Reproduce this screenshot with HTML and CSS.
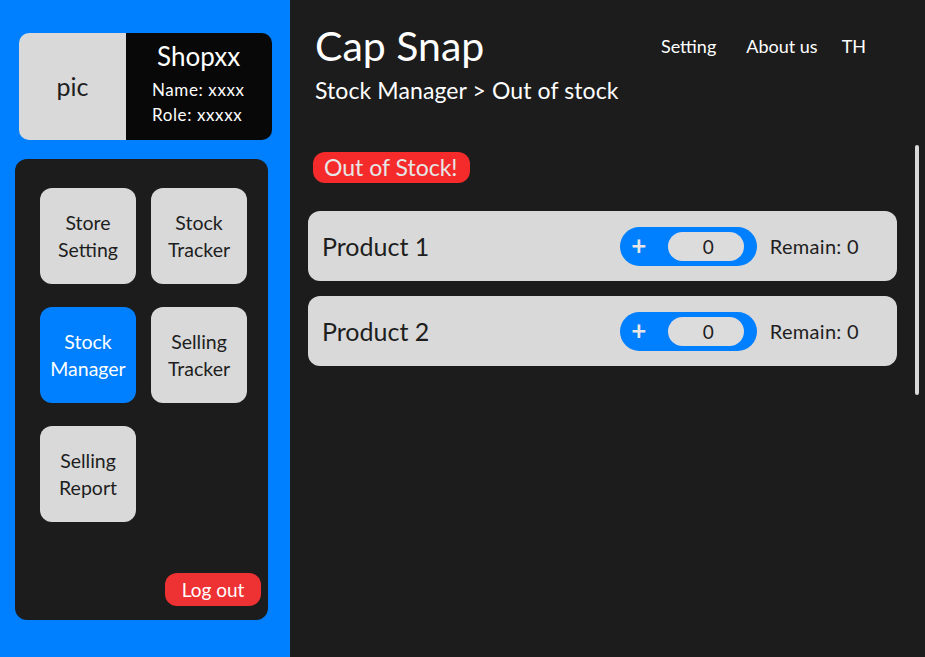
FILE: index.html
```html
<!DOCTYPE html>
<html lang="en">
<head>
<meta charset="utf-8">
<title>Cap Snap - Out of stock</title>
<link rel="stylesheet" href="styles.css">
</head>
<body>
<div class="app">
  <aside class="sidebar">
    <div class="profile">
      <div class="pic">pic</div>
      <div class="info">
        <div class="shop">Shopxx</div>
        <div class="meta">Name: xxxx</div>
        <div class="meta">Role: xxxxx</div>
      </div>
    </div>
    <nav class="panel">
      <div class="tiles">
        <div class="tile">Store<br>Setting</div>
        <div class="tile">Stock<br>Tracker</div>
        <div class="tile active">Stock<br>Manager</div>
        <div class="tile">Selling<br>Tracker</div>
        <div class="tile">Selling<br>Report</div>
      </div>
      <button class="logout">Log out</button>
    </nav>
  </aside>
  <main class="main">
    <header class="header">
      <div class="title">Cap Snap</div>
      <ul class="links">
        <li class="l-setting">Setting</li>
        <li class="l-about">About us</li>
        <li class="l-th">TH</li>
      </ul>
    </header>
    <div class="crumb">Stock Manager &gt; Out of stock</div>
    <section class="content">
      <div class="list">
        <div class="badge">Out of Stock!</div>
        <div class="card">
          <div class="name">Product 1</div>
          <div class="pill"><span class="plus">+</span><span class="field">0</span></div>
          <div class="remain">Remain: 0</div>
        </div>
        <div class="card">
          <div class="name">Product 2</div>
          <div class="pill"><span class="plus">+</span><span class="field">0</span></div>
          <div class="remain">Remain: 0</div>
        </div>
      </div>
      <div class="scrollbar"></div>
    </section>
  </main>
</div>
</body>
</html>
```
FILE: styles.css
```css
* { box-sizing: border-box; }
html, body { margin: 0; padding: 0; }
body {
  width: 925px;
  height: 657px;
  overflow: hidden;
  font-family: "Lato", "Open Sans", sans-serif;
  background: #1c1c1c;
}
.app {
  display: flex;
  width: 925px;
  height: 657px;
}
.sidebar {
  width: 290px;
  flex: none;
  background: #0080ff;
  padding-top: 33px;
  display: flex;
  flex-direction: column;
}
.profile {
  margin-left: 19px;
  width: 253px;
  height: 107px;
  display: flex;
}
.pic {
  width: 107px;
  background: #d9d9d9;
  border-radius: 10px 0 0 10px;
  display: flex;
  align-items: center;
  justify-content: center;
  font-size: 25px;
  color: #1e1e1e;
  padding-bottom: 2px;
}
.info {
  flex: 1;
  background: #080808;
  border-radius: 0 10px 10px 0;
  color: #fff;
  padding: 7px 0 0 26px;
}
.shop {
  font-size: 26px;
  line-height: 32px;
  padding-left: 5px;
  margin-bottom: 5px;
}
.meta {
  font-size: 17px;
  line-height: 25px;
  letter-spacing: 0.6px;
}
.panel {
  margin: 19px 0 0 15px;
  width: 253px;
  height: 461px;
  background: #1c1c1c;
  border-radius: 12px;
  padding: 29px 7px 14px 25px;
  display: flex;
  flex-direction: column;
}
.tiles {
  display: grid;
  grid-template-columns: 96px 96px;
  grid-auto-rows: 96px;
  column-gap: 15px;
  row-gap: 23px;
}
.tile {
  background: #d9d9d9;
  border-radius: 12px;
  display: flex;
  align-items: center;
  justify-content: center;
  text-align: center;
  font-size: 19.5px;
  line-height: 27px;
  color: #1e1e1e;
}
.tile.active {
  background: #0080ff;
  color: #fff;
}
.logout {
  margin-top: auto;
  align-self: flex-end;
  width: 96px;
  height: 33px;
  border: none;
  border-radius: 12px;
  background: #ee3233;
  color: #fff;
  font-family: inherit;
  font-size: 19px;
  padding: 0;
}
.main {
  flex: 1;
  display: flex;
  flex-direction: column;
  color: #fff;
}
.header {
  display: flex;
  align-items: center;
  padding: 22px 0 0 25px;
  height: 70px;
}
.title {
  font-size: 41px;
  line-height: 46px;
}
.links {
  list-style: none;
  margin: 0 0 0 auto;
  padding: 0;
  display: flex;
  font-size: 18px;
  margin-right: 59px;
  align-self: flex-start;
  padding-top: 13px;
}
.l-about { margin-left: 30px; }
.l-th { margin-left: 24px; }
.crumb {
  padding-left: 25px;
  font-size: 23px;
  line-height: 28px;
  margin-top: 6px;
  letter-spacing: 0.1px;
}
.content {
  display: flex;
  margin-top: 41px;
}
.list {
  flex: 1;
  margin-left: 18px;
  margin-right: 18px;
  display: flex;
  flex-direction: column;
}
.badge {
  align-self: flex-start;
  margin: 7px 0 0 5px;
  background: #f52b2b;
  color: #e6e6e6;
  font-size: 23px;
  height: 31px;
  line-height: 31px;
  padding: 0 12px 0 11px;
  border-radius: 12px;
}
.card {
  margin-top: 28px;
  height: 70px;
  background: #d9d9d9;
  border-radius: 12px;
  display: flex;
  align-items: center;
  padding: 0 38px 0 14px;
  color: #1e1e1e;
}
.card + .card { margin-top: 15px; }
.name {
  font-size: 25px;
  flex: 1;
}
.pill {
  width: 137px;
  height: 39px;
  background: #0080ff;
  border-radius: 20px;
  display: flex;
  align-items: center;
  padding: 0 13px 0 8px;
}
.plus {
  width: 22px;
  text-align: center;
  color: #e6e6e6;
  font-size: 26px;
  font-weight: bold;
  line-height: 26px;
  margin-top: -3px;
}
.field {
  margin-left: auto;
  width: 76px;
  height: 29px;
  border-radius: 15px;
  background: #dcdcdc;
  color: #1e1e1e;
  font-size: 19px;
  display: flex;
  align-items: center;
  justify-content: center;
  padding-left: 5px;
}
.remain {
  margin-left: 13px;
  font-size: 20px;
  letter-spacing: 0.3px;
}
.scrollbar {
  width: 4px;
  height: 250px;
  background: #d9d9d9;
  border-radius: 2px;
  margin-right: 6px;
}
```
